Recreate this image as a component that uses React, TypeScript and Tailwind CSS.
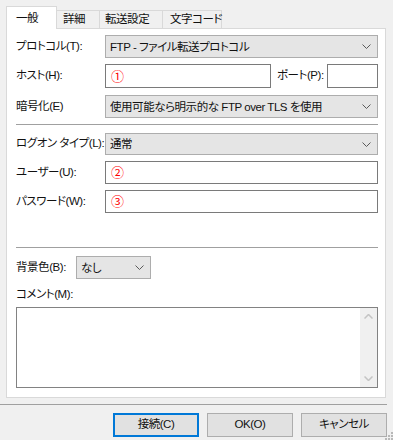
import React from "react";

function Chevron() {
  return (
    <svg width="9" height="5" viewBox="0 0 9 5" className="shrink-0">
      <path d="M0.5 0.5 L4.5 4.5 L8.5 0.5" fill="none" stroke="#5a5a5a" strokeWidth="1" />
    </svg>
  );
}

function Select({ text, h, w }: { text: string; h: string; w: string }) {
  return (
    <div className={`flex items-center ${h} ${w} bg-[#e5e5e5] border border-[#adadad] pl-[4px] pr-[6px]`}>
      <span className="flex-1 truncate leading-[16px]">{text}</span>
      <Chevron />
    </div>
  );
}

function Input({ mark, h, w }: { mark?: string; h: string; w: string }) {
  return (
    <div className={`flex items-center ${h} ${w} bg-white border border-[#7a7a7a] pl-[5px]`}>
      {mark && <span className="text-[#ff0000] text-[13px] leading-none">{mark}</span>}
    </div>
  );
}

function Row({ label, children, mt }: { label: string; children: React.ReactNode; mt: string }) {
  return (
    <div className={`flex items-center ${mt}`}>
      <div className="w-[89px] shrink-0 whitespace-nowrap">{label}</div>
      {children}
    </div>
  );
}

export default function App() {
  return (
    <div className="relative w-[393px] h-[440px] bg-[#f0f0f0] overflow-hidden text-[11.5px] text-[#111] font-['Liberation_Sans','Noto_Sans_CJK_JP',sans-serif] [font-feature-settings:'palt'] tracking-[-0.45px]">
      {/* Tabs */}
      <div className="flex items-end h-[28px] pl-[6px] relative z-10">
        <div className="w-[51px] h-[23px] bg-white border-l border-t border-r border-[#d9d9d9] pl-[9px] pt-[3px] -mb-px whitespace-nowrap">
          一般
        </div>
        <div className="w-[43px] h-[18px] border-t border-r border-[#d9d9d9] pl-[6px] leading-[17px] whitespace-nowrap">詳細</div>
        <div className="w-[63px] h-[18px] border-t border-r border-[#d9d9d9] pl-[5px] leading-[17px] whitespace-nowrap">転送設定</div>
        <div className="w-[59px] h-[18px] border-t border-r border-[#d9d9d9] pl-[7px] leading-[17px] whitespace-nowrap">文字コード</div>
      </div>

      {/* Panel */}
      <div className="ml-[6px] w-[380px] h-[370px] bg-white border border-[#d9d9d9] pl-[9px] pr-[7px] pt-[6px] flex flex-col">
        <Row label="プロトコル(T):" mt="mt-0">
          <Select text="FTP - ファイル転送プロトコル" h="h-[23px]" w="w-[273px]" />
        </Row>
        <Row label="ホスト(H):" mt="mt-[6px]">
          <Input mark="①" h="h-[24px]" w="w-[166px]" />
          <div className="w-[56px] pl-[6px] whitespace-nowrap">ポート(P):</div>
          <Input h="h-[24px]" w="w-[51px]" />
        </Row>
        <Row label="暗号化(E)" mt="mt-[7px]">
          <Select text="使用可能なら明示的な FTP over TLS を使用" h="h-[23px]" w="w-[273px]" />
        </Row>
        <div className="mt-[6px] h-px bg-[#a0a0a0]" />
        <Row label="ログオン タイプ(L):" mt="mt-[8px]">
          <Select text="通常" h="h-[22px]" w="w-[273px]" />
        </Row>
        <Row label="ユーザー(U):" mt="mt-[6px]">
          <Input mark="②" h="h-[23px]" w="w-[273px]" />
        </Row>
        <Row label="パスワード(W):" mt="mt-[6px]">
          <Input mark="③" h="h-[23px]" w="w-[273px]" />
        </Row>
        <div className="mt-[34px] h-px bg-[#a0a0a0]" />
        <div className="flex items-center mt-[8px]">
          <div className="w-[60px] shrink-0 whitespace-nowrap">背景色(B):</div>
          <Select text="なし" h="h-[23px]" w="w-[75px]" />
        </div>
        <div className="mt-[7px] h-[16px] leading-[16px]">コメント(M):</div>
        <div className="mt-[5px] h-[81px] w-[362px] border border-[#828282] bg-white flex justify-end">
          <div className="w-[17px] h-full bg-[#f0f0f0] flex flex-col items-center justify-between py-[6px]">
            <svg width="9" height="5" viewBox="0 0 9 5">
              <path d="M0.5 4.5 L4.5 0.5 L8.5 4.5" fill="none" stroke="#c4c4c4" strokeWidth="1.5" />
            </svg>
            <svg width="9" height="5" viewBox="0 0 9 5">
              <path d="M0.5 0.5 L4.5 4.5 L8.5 0.5" fill="none" stroke="#c4c4c4" strokeWidth="1.5" />
            </svg>
          </div>
        </div>
      </div>

      {/* Bottom separator */}
      <div className="mt-[6px] w-[387px] h-px bg-[#a0a0a0]" />

      {/* Buttons */}
      <div className="mt-[8px] flex justify-end gap-[8px] pr-[6px]">
        <div className="w-[86px] h-[24px] bg-[#e1e1e1] border-2 border-[#0078d7] flex items-center justify-center">接続(C)</div>
        <div className="w-[86px] h-[24px] bg-[#e1e1e1] border border-[#adadad] flex items-center justify-center">OK(O)</div>
        <div className="w-[86px] h-[24px] bg-[#e1e1e1] border border-[#adadad] flex items-center justify-center">キャンセル</div>
      </div>

      {/* Size grip */}
      <svg className="absolute right-0 bottom-0" width="8" height="8" viewBox="0 0 8 8">
        <rect x="6" y="0" width="2" height="2" fill="#b8b8b8" />
        <rect x="3" y="3" width="2" height="2" fill="#b8b8b8" />
        <rect x="6" y="3" width="2" height="2" fill="#b8b8b8" />
        <rect x="0" y="6" width="2" height="2" fill="#b8b8b8" />
        <rect x="3" y="6" width="2" height="2" fill="#b8b8b8" />
        <rect x="6" y="6" width="2" height="2" fill="#b8b8b8" />
      </svg>
    </div>
  );
}
